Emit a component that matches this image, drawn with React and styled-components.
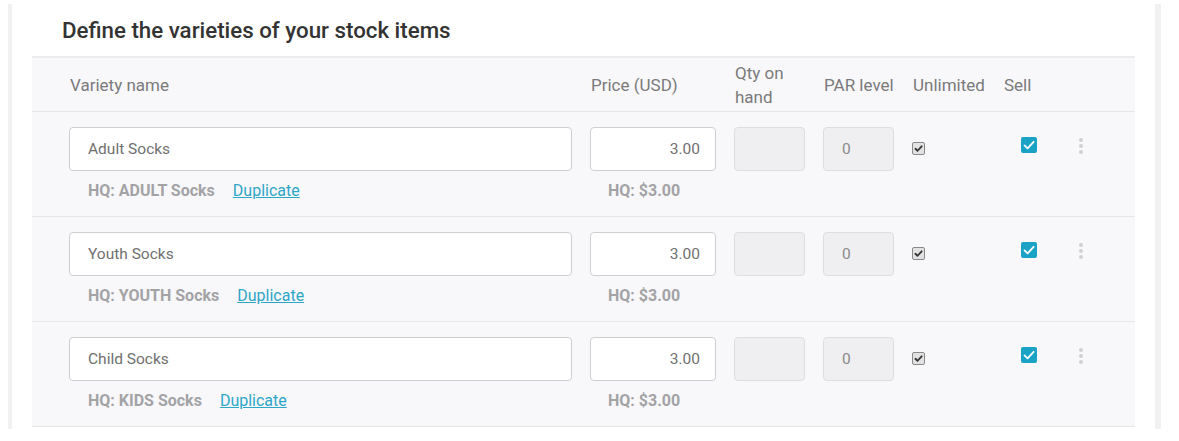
import React from 'react'
import styled, { createGlobalStyle } from 'styled-components'

const GlobalStyle = createGlobalStyle`
  body {
    margin: 0;
    background: #fff;
    font-family: Roboto, "Liberation Sans", sans-serif;
  }
`

const varieties = [
  { name: 'Adult Socks', hq: 'HQ: ADULT Socks', price: '3.00' },
  { name: 'Youth Socks', hq: 'HQ: YOUTH Socks', price: '3.00' },
  { name: 'Child Socks', hq: 'HQ: KIDS Socks', price: '3.00' },
]

const CheckIcon = ({ color, width = 2 }) => (
  <svg viewBox="0 0 16 16" width="100%" height="100%">
    <path
      d="M3.5 8.4 L6.6 11.3 L12.6 4.8"
      fill="none"
      stroke={color}
      strokeWidth={width}
      strokeLinecap="round"
      strokeLinejoin="round"
    />
  </svg>
)

const App = () => {
  return (
    <>
      <GlobalStyle />
      <Panel>
        <Title>Define the varieties of your stock items</Title>
        <Table>
          <HeaderRow>
            <HeadCell>Variety name</HeadCell>
            <HeadCell>Price (USD)</HeadCell>
            <HeadCell>Qty on hand</HeadCell>
            <HeadCell>PAR level</HeadCell>
            <HeadCell>Unlimited</HeadCell>
            <HeadCell>Sell</HeadCell>
            <span />
          </HeaderRow>
          {varieties.map((v) => (
            <Row key={v.name}>
              <TextInput defaultValue={v.name} />
              <TextInput defaultValue={v.price} $align="right" />
              <TextInput disabled defaultValue="" />
              <TextInput disabled defaultValue="0" />
              <SmallCheck>
                <CheckIcon color="#333" width={2.6} />
              </SmallCheck>
              <SellCheck>
                <CheckIcon color="#fff" width={1.8} />
              </SellCheck>
              <Kebab>
                <i />
                <i />
                <i />
              </Kebab>
              <Sub $pad={19}>
                {v.hq}
                <DupLink>Duplicate</DupLink>
              </Sub>
              <Sub $pad={18}>HQ: $3.00</Sub>
            </Row>
          ))}
        </Table>
      </Panel>
    </>
  )
}

const Panel = styled.div`
  margin: 4px 8px 0;
  width: 1153px;
  height: 425px;
  border-left: 4px solid #f1f1f1;
  border-right: 6px solid #f1f1f1;
  padding: 0 20px;
  box-sizing: border-box;
  overflow: hidden;
`

const Title = styled.h2`
  margin: 0;
  padding: 13px 30px 12px;
  font-size: 22.3px;
  line-height: 27px;
  font-weight: 500;
  color: #333;
`

const Table = styled.div`
  border-top: 2px solid #ececec;
  background: #f8f8fa;
`

const cols = '503px 126px 71px 71px 73px 58px 30px'

const HeaderRow = styled.div`
  display: grid;
  grid-template-columns: ${cols};
  column-gap: 18px;
  align-items: center;
  height: 53px;
  padding-left: 38px;
  border-bottom: 1px solid #e6e6e8;
`

const HeadCell = styled.div`
  font-size: 17px;
  line-height: 24px;
  color: #7a7a7a;
`

const Row = styled.div`
  display: grid;
  grid-template-columns: ${cols};
  grid-template-rows: 44px 20px;
  column-gap: 18px;
  row-gap: 10px;
  padding: 15px 0 15px 37px;
  border-bottom: 1px solid #e6e6e8;
`

const TextInput = styled.input`
  box-sizing: border-box;
  width: 100%;
  height: 44px;
  margin: 0;
  padding: 0 ${(p) => (p.$align === 'right' ? '15px' : '18px')};
  border: 1px solid ${(p) => (p.disabled ? '#dedee0' : '#cfcfd2')};
  border-radius: 4px;
  background: ${(p) => (p.disabled ? '#efeff1' : '#fff')};
  font-family: Roboto, "Liberation Sans", sans-serif;
  font-size: 15.5px;
  font-weight: 400;
  color: ${(p) => (p.disabled ? '#8a8a8a' : '#707070')};
  text-align: ${(p) => p.$align || 'left'};
  outline: none;
`

const SmallCheck = styled.span`
  align-self: center;
  box-sizing: border-box;
  width: 13px;
  height: 13px;
  margin-top: -1px;
  border: 1px solid #8a8a8a;
  border-radius: 2px;
  background: #e2e2e2;
  padding: 0;
  display: flex;
`

const SellCheck = styled.span`
  align-self: start;
  margin: 10px 0 0 18px;
  width: 16px;
  height: 16px;
  border-radius: 2px;
  background: #1ba3c6;
  display: flex;
`

const Kebab = styled.span`
  align-self: start;
  margin: 11px 0 0 0;
  display: flex;
  flex-direction: column;
  gap: 2px;
  width: 4px;

  i {
    display: block;
    width: 4px;
    height: 4px;
    border-radius: 50%;
    background: #d0d0d3;
  }
`

const Sub = styled.div`
  grid-row: 2;
  padding-left: ${(p) => p.$pad}px;
  font-size: 16px;
  line-height: 20px;
  font-weight: 700;
  color: #a3a3a6;
  white-space: nowrap;
`

const DupLink = styled.a`
  margin-left: 18px;
  font-size: 16px;
  font-weight: 400;
  color: #2ea6c8;
  text-decoration: underline;
  cursor: pointer;
`

export default App
